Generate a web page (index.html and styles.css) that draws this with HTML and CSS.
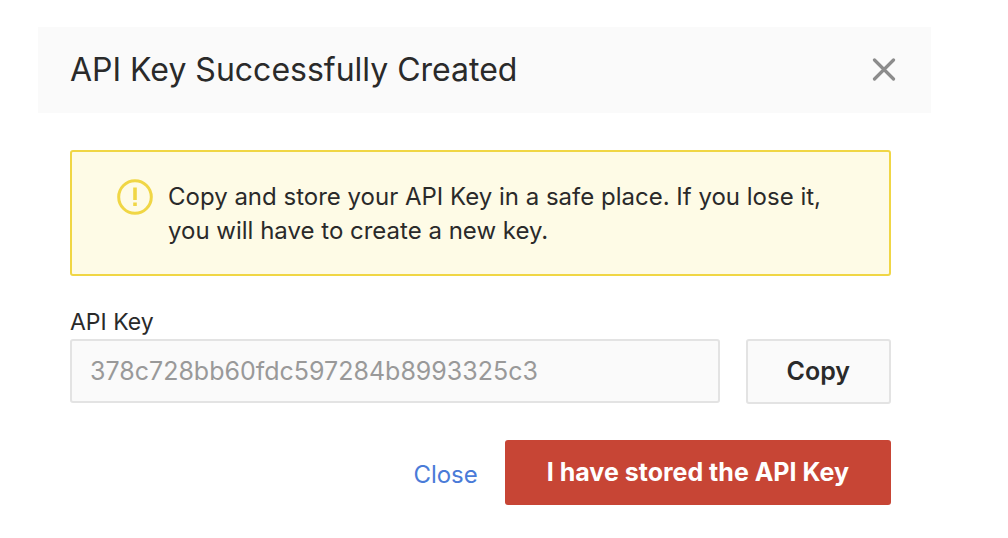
FILE: index.html
```html
<!DOCTYPE html>
<html lang="en">
<head>
<meta charset="utf-8">
<meta name="viewport" content="width=device-width, initial-scale=1">
<title>API Key Successfully Created</title>
<link rel="stylesheet" href="styles.css">
</head>
<body>
<main class="dialog" role="dialog" aria-labelledby="title">
  <header class="dialog-header">
    <h1 class="title" id="title">API Key Successfully Created</h1>
    <button class="dismiss" type="button" aria-label="Dismiss">
      <svg width="24" height="24" viewBox="0 0 24 24" fill="none" stroke="#8c8c8c" stroke-width="3.2" stroke-linecap="round"><path d="M2.5 2l19 19M21.5 2l-19 19"/></svg>
    </button>
  </header>
  <div class="dialog-body">
    <div class="notice">
      <svg class="notice-icon" width="36" height="34" viewBox="0 1 36 34" fill="none" stroke="#f0d645" stroke-width="3"><circle cx="18" cy="18" r="16.3"/><path stroke-width="3.6" d="M18 8.5v12.5M18 23.4v3.6"/></svg>
      <p class="notice-text">Copy and store your API Key in a safe place. If you lose it, you will have to create a new key.</p>
    </div>
    <label class="label" for="key">API Key</label>
    <div class="key-row">
      <input class="key" id="key" type="text" readonly value="378c728bb60fdc597284b8993325c3">
      <button class="copy" type="button">Copy</button>
    </div>
    <footer class="actions">
      <button class="close" type="button">Close</button>
      <button class="confirm" type="button">I have stored the API Key</button>
    </footer>
  </div>
</main>
</body>
</html>
```
FILE: styles.css
```css
* {
  box-sizing: border-box;
}

body {
  margin: 0;
  padding: 27px 77px 32px 38px;
  background: #fff;
  color: #2a2a2a;
  font-family: Inter, "Liberation Sans", sans-serif;
}

button,
input {
  font: inherit;
}

.dialog-header {
  display: flex;
  align-items: center;
  justify-content: space-between;
  padding: 24px 35px 24px 32px;
  background: #fafafa;
}

.title {
  margin: 0;
  font-size: 32px;
  font-weight: 400;
  line-height: 38px;
}

.dismiss {
  display: flex;
  padding: 0;
  border: 0;
  background: none;
}

.dialog-body {
  padding: 37px 40px 0 32px;
}

.notice {
  display: flex;
  gap: 15px;
  padding: 28px 45px 26px;
  border: 2px solid #f0d645;
  border-radius: 3px;
  background: #fefbe6;
}

.notice-icon {
  flex: none;
  overflow: visible;
}

.notice-text {
  margin: 0;
  font-size: 24px;
  line-height: 34px;
}

.label {
  display: block;
  margin-top: 32px;
  font-size: 23px;
  line-height: 28px;
}

.key-row {
  display: flex;
  align-items: flex-start;
  gap: 26px;
  margin-top: 3px;
}

.key {
  flex: 1;
  min-width: 0;
  height: 64px;
  padding: 0 18px;
  border: 2px solid #e3e3e3;
  border-radius: 3px;
  background: #fafafa;
  color: #999;
  font-size: 25px;
}

.copy {
  padding: 16px 39px;
  border: 2px solid #e3e3e3;
  border-radius: 3px;
  background: #fafafa;
  color: #2a2a2a;
  font-size: 25px;
  font-weight: 600;
  line-height: 29px;
}

.actions {
  display: flex;
  justify-content: flex-end;
  gap: 27px;
  margin-top: 36px;
}

.close {
  padding: 4px 0 0;
  border: 0;
  background: none;
  color: #4a7bd8;
  font-size: 24px;
}

.confirm {
  padding: 16px 42px;
  border: 0;
  border-radius: 3px;
  background: #c74535;
  color: #fff;
  font-size: 25px;
  font-weight: 700;
  line-height: 33px;
}
```
